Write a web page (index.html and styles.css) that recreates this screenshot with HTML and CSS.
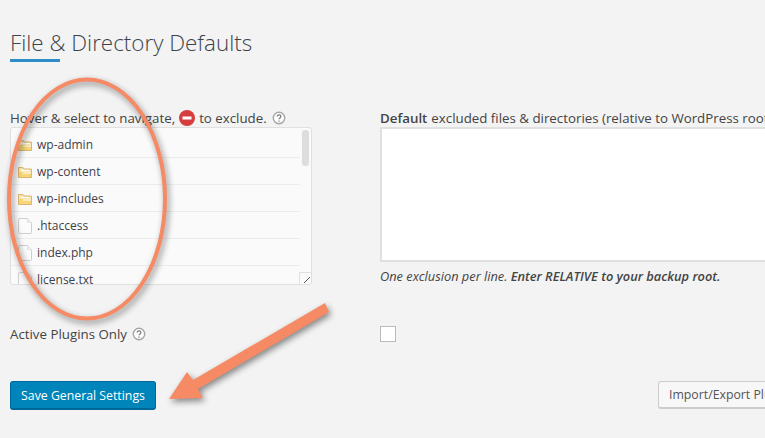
FILE: index.html
```html
<!DOCTYPE html>
<html lang="en">
<head>
<meta charset="UTF-8">
<title>File &amp; Directory Defaults</title>
<link rel="stylesheet" href="styles.css">
</head>
<body>

<svg class="defs" width="0" height="0">
  <symbol id="folder" viewBox="0 0 14 11">
    <path d="M.5 10.500V.5h4.500l1 1.500h7.500v8.500z" fill="#f8e6b4" stroke="#deb36c"/>
    <path d="M1 5h12v5H1z" fill="#f6d676"/>
    <path d="M3 3.500h8M5 6h8" stroke="#fff" fill="none"/>
  </symbol>
  <symbol id="file" viewBox="0 0 14 16">
    <path d="M1.500.5h8l4 4v10a1 1 0 0 1-1 1h-11a1 1 0 0 1-1-1v-13a1 1 0 0 1 1-1z" fill="#fbfbfb" stroke="#cfcfcf"/>
    <path d="M9.500.5v4h4" fill="#f2f2f2" stroke="#e2e2e2"/>
  </symbol>
  <symbol id="help" viewBox="0 0 14 14">
    <circle cx="7" cy="7" r="5.700" fill="#fff" stroke="#a5a5a5" stroke-width="1.400"/>
    <path d="M5.200 5.600c0-2.300 3.700-2.300 3.700 0 0 1.400-1.900 1.300-1.900 2.700M7 9.400v1.300" fill="none" stroke="#777" stroke-width="1.200"/>
  </symbol>
</svg>

<main class="page">
  <h1 class="title">File &amp; Directory Defaults</h1>

  <div class="settings">
    <div class="field">
      <div class="label">
        Hover &amp; select to navigate,
        <svg class="no-icon" viewBox="0 0 16 16"><circle cx="8" cy="8" r="8" fill="#d63e3e"/><rect x="3.500" y="6.500" width="9" height="3" fill="#fff"/></svg>
        to exclude.
        <svg class="help"><use href="#help"/></svg>
      </div>
      <div class="tree">
        <div class="row"><svg class="ico-folder"><use href="#folder"/></svg>wp-admin</div>
        <div class="row"><svg class="ico-folder"><use href="#folder"/></svg>wp-content</div>
        <div class="row"><svg class="ico-folder"><use href="#folder"/></svg>wp-includes</div>
        <div class="row"><svg class="ico-file"><use href="#file"/></svg>.htaccess</div>
        <div class="row"><svg class="ico-file"><use href="#file"/></svg>index.php</div>
        <div class="row"><svg class="ico-file"><use href="#file"/></svg>license.txt</div>
        <span class="thumb"></span>
        <span class="grip"></span>
      </div>
    </div>

    <div class="field">
      <div class="label"><strong>Default</strong> excluded files &amp; directories (relative to WordPress root)</div>
      <div class="excludes"></div>
      <p class="hint">One exclusion per line. <strong>Enter RELATIVE to your backup root.</strong></p>
    </div>

    <div class="label plugins-label">Active Plugins Only <svg class="help"><use href="#help"/></svg></div>
    <div class="plugins-check"><span class="check"></span></div>
  </div>

  <div class="actions">
    <button class="btn btn-primary">Save General Settings</button>
    <button class="btn btn-plain">Import/Export Plugin Settings</button>
  </div>
</main>

<svg class="marks" viewBox="0 0 765 438">
  <ellipse cx="87" cy="199" rx="78" ry="119.500" fill="none" stroke="#f58a65" stroke-width="4"/>
  <polygon points="325,303 329,312 198,389 203,398 169,399 187,372 193,380" fill="#f58a65"/>
</svg>

</body>
</html>
```

FILE: styles.css
```css
html, body { margin: 0; height: 100%; }
body {
  background: #f3f3f3;
  color: #444;
  font-family: 'Open Sans', sans-serif;
  font-size: 13.300px;
  overflow: hidden;
  position: relative;
}
.defs { position: absolute; }
.page { width: 900px; padding: 0 0 0 10px; }

.title {
  display: inline-block;
  margin: 0;
  padding-top: 27px;
  font-size: 22.400px;
  line-height: 32px;
  font-weight: 300;
  color: #3c434a;
}
.title::after {
  content: "";
  display: block;
  width: 50px;
  height: 3px;
  background: #2e8dc8;
}

.settings {
  display: grid;
  grid-template-columns: 302px 460px;
  column-gap: 68px;
  margin-top: 46px;
}
.label {
  height: 19px;
  line-height: 18px;
  white-space: nowrap;
  display: flex;
  align-items: center;
  gap: 4px;
}
.label strong { font-weight: 600; }
.no-icon { width: 16px; height: 16px; }
.help { width: 14px; height: 14px; margin-left: 1px; }

.tree {
  height: 156px;
  background: #fafafa;
  border: 1px solid #e0e0e0;
  border-radius: 3px;
  overflow: hidden;
  position: relative;
}
.row {
  width: 289px;
  height: 26px;
  border-bottom: 1px solid #ececec;
  display: flex;
  align-items: center;
  font-size: 12px;
  color: #3f3f4a;
}
.row:first-child { padding-top: 3px; }
.ico-folder { width: 14px; height: 11px; margin: 2px 5px 0 7px; }
.ico-file { width: 14px; height: 16px; margin: 2px 5px 0 7px; }
.thumb {
  position: absolute;
  top: 2px;
  right: 2px;
  width: 7px;
  height: 36px;
  background: #ddd;
  border-radius: 3px;
}
.grip {
  position: absolute;
  right: 0;
  bottom: 0;
  width: 11px;
  height: 11px;
  background: #fafafa;
  border: 1px solid #e0e0e0;
  border-width: 1px 0 0 1px;
}
.grip::after {
  content: "";
  position: absolute;
  right: 1px;
  bottom: 1px;
  width: 6px;
  height: 6px;
  background: linear-gradient(135deg, transparent 46%, #555 46%, #555 58%, transparent 58%);
}

.excludes {
  height: 131px;
  background: #fff;
  border: 2px solid #e0e0e0;
}
.hint {
  margin: 5px 0 0;
  font-size: 12.800px;
  line-height: 18px;
  font-style: italic;
  white-space: nowrap;
}
.hint strong { font-weight: 600; }

.plugins-label { margin-top: 39px; }
.plugins-check { margin-top: 41px; }
.check {
  display: block;
  width: 14px;
  height: 14px;
  background: #fff;
  border: 1px solid #bbb;
}

.actions {
  display: flex;
  justify-content: space-between;
  align-items: flex-start;
  width: 755px;
  margin-top: 38px;
}
.btn {
  font-family: inherit;
  font-size: 12.300px;
  border-radius: 3px;
  white-space: nowrap;
  padding: 0;
}
.btn-primary {
  width: 146px;
  height: 29px;
  background: #0085ba;
  border: 1px solid #006799;
  border-bottom-width: 2px;
  color: #fff;
}
.btn-plain {
  flex: none;
  width: 210px;
  height: 28px;
  margin-right: -103px;
  background: #f7f7f7;
  border: 1px solid #ccc;
  border-bottom-width: 2px;
  color: #555;
  text-align: left;
  padding-left: 10px;
}

.marks {
  position: absolute;
  top: 0;
  left: 0;
  width: 765px;
  height: 438px;
  filter: drop-shadow(2px 3px 3px rgba(0, 0, 0, 0.45));
}
```
